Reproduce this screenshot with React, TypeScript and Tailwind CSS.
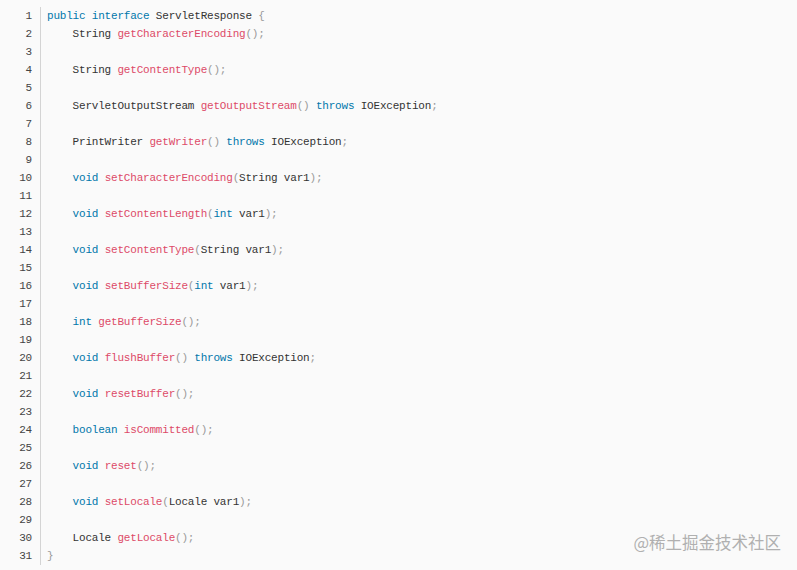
type Tok = [string, string?];

const K = "text-[#0077aa]";
const F = "text-[#dd4a68]";
const P = "text-[#999999]";

const lines: Tok[][] = [
  [["public interface", K], [" ServletResponse "], ["{", P]],
  [["    String "], ["getCharacterEncoding", F], ["();", P]],
  [],
  [["    String "], ["getContentType", F], ["();", P]],
  [],
  [["    ServletOutputStream "], ["getOutputStream", F], ["()", P], [" "], ["throws", K], [" IOException"], [";", P]],
  [],
  [["    PrintWriter "], ["getWriter", F], ["()", P], [" "], ["throws", K], [" IOException"], [";", P]],
  [],
  [["    "], ["void", K], [" "], ["setCharacterEncoding", F], ["(", P], ["String var1"], [");", P]],
  [],
  [["    "], ["void", K], [" "], ["setContentLength", F], ["(", P], ["int", K], [" var1"], [");", P]],
  [],
  [["    "], ["void", K], [" "], ["setContentType", F], ["(", P], ["String var1"], [");", P]],
  [],
  [["    "], ["void", K], [" "], ["setBufferSize", F], ["(", P], ["int", K], [" var1"], [");", P]],
  [],
  [["    "], ["int", K], [" "], ["getBufferSize", F], ["();", P]],
  [],
  [["    "], ["void", K], [" "], ["flushBuffer", F], ["()", P], [" "], ["throws", K], [" IOException"], [";", P]],
  [],
  [["    "], ["void", K], [" "], ["resetBuffer", F], ["();", P]],
  [],
  [["    "], ["boolean", K], [" "], ["isCommitted", F], ["();", P]],
  [],
  [["    "], ["void", K], [" "], ["reset", F], ["();", P]],
  [],
  [["    "], ["void", K], [" "], ["setLocale", F], ["(", P], ["Locale var1"], [");", P]],
  [],
  [["    Locale "], ["getLocale", F], ["();", P]],
  [["}", P]],
];

export default function App() {
  return (
    <div className="relative h-[570px] w-full overflow-hidden bg-[#fafafa]">
      <div className="flex pt-[7px] font-['Liberation_Mono',monospace] text-[11px] leading-[18px] tracking-[-0.2px] text-[#333333]">
        <div className="w-[41px] shrink-0 border-r border-[#d4d4d4] pr-[8px] text-right text-[#444444]">
          {lines.map((_, i) => (
            <div key={i}>{i + 1}</div>
          ))}
        </div>
        <div className="pl-[6px] whitespace-pre">
          {lines.map((toks, i) => (
            <div key={i} className="h-[18px]">
              {toks.map(([t, c], j) => (
                <span key={j} className={c}>
                  {t}
                </span>
              ))}
            </div>
          ))}
        </div>
      </div>
      <div className="absolute right-[16px] bottom-[18px] font-['Noto_Sans_CJK_SC',sans-serif] text-[16.5px] leading-[20px] text-[#b0b0b0]">
        @稀土掘金技术社区
      </div>
    </div>
  );
}
